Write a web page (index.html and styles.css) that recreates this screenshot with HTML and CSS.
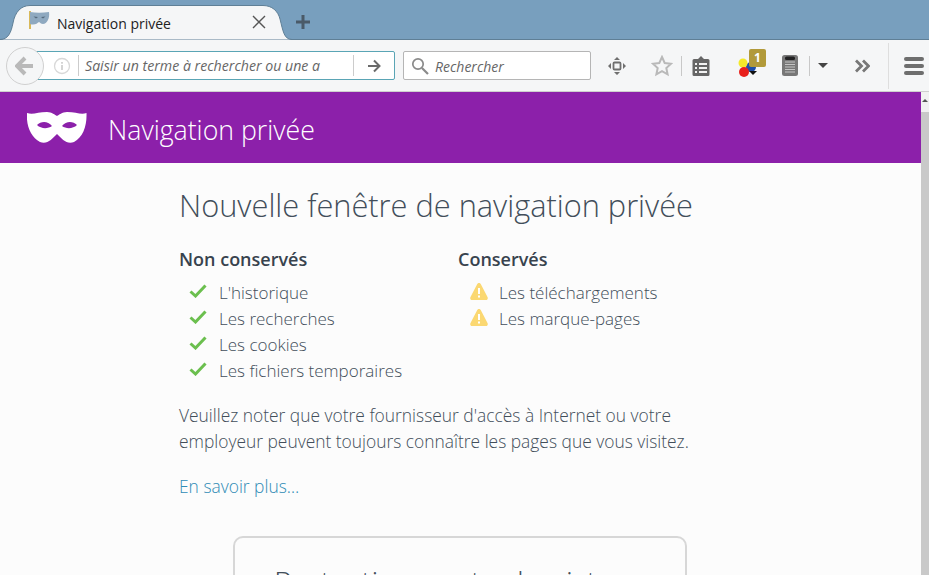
FILE: index.html
```html
<!DOCTYPE html>
<html lang="fr">
<head>
    <meta charset="UTF-8">
    <meta name="viewport" content="width=device-width, initial-scale=1.0">
    <title>Navigation privée</title>
    <link rel="stylesheet" href="styles.css">
</head>
<body>
    <div class="tabstrip">
        <div class="tab">
            <svg class="tab-shape" width="292" height="35" viewBox="0 0 292 35">
                <path d="M0 34.500C8 34.500 11 28 13 18 15 7 21 .5 30 .5H263C272 .5 278 6 280 14 283 26 284 34.500 292 34.500" fill="#f5f6f7" stroke="#5f7f96"/>
            </svg>
            <svg class="tab-icon" width="21" height="18" viewBox="0 0 21 18">
                <rect x="0" y="0" width="2" height="18" fill="#d9b95a"/>
                <path d="M1 1c6 1 12 1 19 0 1 6-2 12-6 12-2 0-3-1.500-4-2-1.500 1-3 2.500-6 2.500-1 0-2 0-3-.5z" fill="#8fa9c0"/>
                <path d="M4.500 5.500l4.500.5-2 1.500zM12 6l4.500-.5-2.500 2z" fill="#54697b"/>
            </svg>
            <span class="tab-title">Navigation privée</span>
            <svg class="tab-close" width="16" height="16" viewBox="0 0 16 16">
                <path d="M2 2l12 12M14 2L2 14" stroke="#555" stroke-width="1.400" fill="none"/>
            </svg>
        </div>
        <svg class="new-tab" width="16" height="16" viewBox="0 0 16 16">
            <path d="M8 1v14M1 8h14" stroke="#4a5a68" stroke-width="3" fill="none"/>
        </svg>
    </div>

    <div class="toolbar">
        <div class="back-btn">
            <svg width="20" height="20" viewBox="0 0 20 20">
                <path d="M10 2l-8 8 8 8M3 10h15" stroke="#b9b9b9" stroke-width="4" fill="none"/>
            </svg>
        </div>
        <div class="urlbar">
            <svg class="info-icon" width="18" height="18" viewBox="0 0 18 18">
                <circle cx="9" cy="9" r="7.500" stroke="#d8d8d8" stroke-width="1.300" fill="none"/>
                <path d="M9 8v5M9 5v1.800" stroke="#d0d0d0" stroke-width="1.800" fill="none"/>
            </svg>
            <span class="url-text">Saisir un terme à rechercher ou une a</span>
            <span class="go-btn">
                <svg width="14" height="14" viewBox="0 0 14 14">
                    <path d="M7 1.500L12.500 7 7 12.500M12 7H1" stroke="#6a6a6a" stroke-width="2" fill="none"/>
                </svg>
            </span>
        </div>
        <div class="searchbar">
            <svg width="18" height="18" viewBox="0 0 18 18">
                <circle cx="7" cy="7" r="5.200" stroke="#8a8a8a" stroke-width="1.700" fill="none"/>
                <path d="M11 11l6 6" stroke="#8a8a8a" stroke-width="2.200" fill="none"/>
            </svg>
            <span>Rechercher</span>
        </div>
        <svg class="tool move" width="18" height="18" viewBox="0 0 18 18">
            <rect x="5.500" y="5.500" width="7" height="7" rx="1" stroke="#6f6f6f" stroke-width="1.800" fill="none"/>
            <path d="M9 0l3 3H6zM9 18l-3-3h6zM0 9l3-3v6zM18 9l-3 3V6z" fill="#6f6f6f"/>
        </svg>
        <svg class="tool star" width="22" height="22" viewBox="0 0 22 22">
            <path d="M11 2l2.700 6 6.300.7-4.700 4.300 1.300 6.400L11 16.200l-5.600 3.200 1.300-6.400L2 8.700 8.300 8z" stroke="#b9b9b9" stroke-width="2" fill="none"/>
        </svg>
        <span class="sep sep-star"></span>
        <svg class="tool clip" width="18" height="20" viewBox="0 0 18 20">
            <path d="M9 0l3 3h4a1.500 1.500 0 0 1 1.500 1.500v14A1.500 1.500 0 0 1 16 20H2a1.500 1.500 0 0 1-1.500-1.500v-14A1.500 1.500 0 0 1 2 3h4z" fill="#666"/>
            <path d="M3 7h2v2H3zM7 7h8v2H7zM3 11h2v2H3zM7 11h8v2H7zM3 15h2v2H3zM7 15h8v2H7z" fill="#f2f2f2"/>
        </svg>
        <div class="tool addon">
            <svg width="22" height="22" viewBox="0 0 22 22">
                <circle cx="14" cy="12" r="5" fill="#1f4fa8"/>
                <circle cx="6" cy="8" r="4.500" fill="#f4e92a"/>
                <circle cx="7" cy="17" r="5" fill="#e8201c"/>
                <path d="M12 16h8l-4 4z" fill="#111"/>
            </svg>
            <span class="addon-badge">1</span>
        </div>
        <svg class="tool reader" width="16" height="21" viewBox="0 0 16 21">
            <rect x="0" y="0" width="16" height="21" rx="2.500" fill="#777"/>
            <rect x="3" y="1.500" width="10" height="3.500" rx="1.500" fill="#222"/>
            <path d="M3 7h10M3 9.500h10M3 12h10M3 14.500h10M3 17h10" stroke="#c4c4c4" stroke-width="1"/>
        </svg>
        <span class="sep sep-reader"></span>
        <span class="caret"></span>
        <svg class="tool more" width="16" height="14" viewBox="0 0 16 14">
            <path d="M2 1.500L7.500 7 2 12.500M9 1.500L14.500 7 9 12.500" stroke="#777" stroke-width="2.800" fill="none"/>
        </svg>
        <span class="sep sep-menu"></span>
        <div class="hamburger"><span></span><span></span><span></span></div>
    </div>

    <div class="viewport">
        <div class="page">
            <header class="banner">
                <svg width="60" height="33" viewBox="0 0 60 33">
                    <path fill-rule="evenodd" fill="#fff" d="M0 1C6 3 11 0 20 0 25 0 28 3 30 4 32 3 35 0 40 0 49 0 54 3 59.500 1 60 14 56 25 47 30 40 33 35 27 30 22 25 27 20 33 13 30 4 25-1 14 0 1zM10 13C14 9 21 9 25 14 21 17 14 17 10 13zM35 14C39 9 46 9 50 13 46 17 39 17 35 14z"/>
                </svg>
                <span>Navigation privée</span>
            </header>

            <div class="content">
                <h1>Nouvelle fenêtre de navigation privée</h1>
                <div class="columns">
                    <div class="col col-left">
                        <h2>Non conservés</h2>
                        <ul>
                            <li><svg class="check" width="18" height="14" viewBox="0 0 18 14"><path d="M1.500 7.500l5 4.500L16.500 1.500" stroke="#6bbf4e" stroke-width="3" fill="none"/></svg>L'historique</li>
                            <li><svg class="check" width="18" height="14" viewBox="0 0 18 14"><path d="M1.500 7.500l5 4.500L16.500 1.500" stroke="#6bbf4e" stroke-width="3" fill="none"/></svg>Les recherches</li>
                            <li><svg class="check" width="18" height="14" viewBox="0 0 18 14"><path d="M1.500 7.500l5 4.500L16.500 1.500" stroke="#6bbf4e" stroke-width="3" fill="none"/></svg>Les cookies</li>
                            <li><svg class="check" width="18" height="14" viewBox="0 0 18 14"><path d="M1.500 7.500l5 4.500L16.500 1.500" stroke="#6bbf4e" stroke-width="3" fill="none"/></svg>Les fichiers temporaires</li>
                        </ul>
                    </div>
                    <div class="col">
                        <h2>Conservés</h2>
                        <ul class="kept">
                            <li><svg class="check" width="18" height="17" viewBox="0 0 18 17"><path d="M9 0c1 0 1.500.5 2 1.500l6.500 12.500c.7 1.500 0 3-1.500 3H2c-1.500 0-2.200-1.500-1.500-3L7 1.500C7.500.5 8 0 9 0z" fill="#fbd872"/><path d="M9 5v6M9 12.500v2" stroke="#fff" stroke-width="2"/></svg>Les téléchargements</li>
                            <li><svg class="check" width="18" height="17" viewBox="0 0 18 17"><path d="M9 0c1 0 1.500.5 2 1.500l6.500 12.500c.7 1.500 0 3-1.500 3H2c-1.500 0-2.200-1.500-1.500-3L7 1.500C7.500.5 8 0 9 0z" fill="#fbd872"/><path d="M9 5v6M9 12.500v2" stroke="#fff" stroke-width="2"/></svg>Les marque-pages</li>
                        </ul>
                    </div>
                </div>
                <p class="note">Veuillez noter que votre fournisseur d'accès à Internet ou votre<br>employeur peuvent toujours connaître les pages que vous visitez.</p>
                <a class="more-link" href="#">En savoir plus…</a>
                <div class="tracking-card">
                    <h3>Protection contre le pistage</h3>
                </div>
            </div>
        </div>
        <div class="scrollbar">
            <span class="scroll-arrow"></span>
            <span class="scroll-thumb"></span>
        </div>
    </div>
</body>
</html>
```

FILE: styles.css
```css
html, body {
    height: 100%;
}
body {
    margin: 0;
    height: 575px;
    overflow: hidden;
    font-family: 'Open Sans', 'Liberation Sans', sans-serif;
    background: #fcfcfc;
    display: flex;
    flex-direction: column;
}

/* tab strip */
.tabstrip {
    height: 40px;
    flex: none;
    box-sizing: border-box;
    background: #789fbe;
    border-bottom: 1px solid #5f7f96;
    display: flex;
    align-items: flex-end;
}
.tab {
    width: 292px;
    height: 35px;
    margin-bottom: -1px;
    box-sizing: border-box;
    position: relative;
    display: flex;
    align-items: center;
    padding: 0 25px 0 29px;
}
.tab-shape {
    position: absolute;
    left: 0;
    top: 0;
}
.tab-icon, .tab-title, .tab-close {
    position: relative;
}
.tab-icon {
    flex: none;
    margin: -5px 7px 0 0;
}
.tab-title {
    flex: 1;
    font-size: 14px;
    color: #222;
    margin-top: 1px;
}
.tab-close {
    margin-top: -1px;
}
.new-tab {
    margin: 0 0 9px 3px;
}

/* toolbar */
.toolbar {
    height: 52px;
    flex: none;
    box-sizing: border-box;
    background: #f5f6f7;
    border-bottom: 1px solid #cfcfcf;
    display: flex;
    align-items: center;
    padding: 0 0 0 6px;
    position: relative;
}
.back-btn {
    position: absolute;
    left: 6px;
    top: 7px;
    width: 38px;
    height: 38px;
    box-sizing: border-box;
    border: 1px solid #d0d0d0;
    border-radius: 50%;
    background: #f5f6f7;
    display: flex;
    align-items: center;
    justify-content: center;
    z-index: 1;
}
.urlbar {
    margin-left: 27px;
    width: 362px;
    height: 29px;
    box-sizing: border-box;
    background: #fff;
    border: 1px solid #5aa5b5;
    border-radius: 2px;
    display: flex;
    align-items: center;
    padding-left: 19px;
}
.info-icon {
    flex: none;
    margin-right: 7px;
}
.url-text {
    flex: 1;
    height: 21px;
    line-height: 22px;
    border-left: 1px solid #ccc;
    padding-left: 6px;
    font-size: 14.150px;
    font-style: italic;
    color: #666;
    white-space: nowrap;
    overflow: hidden;
}
.go-btn {
    width: 41px;
    height: 21px;
    flex: none;
    box-sizing: border-box;
    border-left: 1px solid #ccc;
    display: flex;
    align-items: center;
    justify-content: center;
}
.searchbar {
    margin-left: 8px;
    width: 188px;
    height: 29px;
    box-sizing: border-box;
    background: #fff;
    border: 1px solid #b5b5b5;
    border-radius: 2px;
    display: flex;
    align-items: center;
    padding-left: 7px;
    font-size: 14px;
    font-style: italic;
    color: #666;
}
.searchbar span {
    margin: 1px 0 0 6px;
}
.tool {
    flex: none;
}
.move {
    margin-left: 17px;
}
.star {
    margin-left: 25px;
}
.sep {
    flex: none;
    width: 1px;
    background: #c8c8c8;
}
.sep-star {
    height: 20px;
    margin-left: 8px;
}
.clip {
    margin-left: 10px;
}
.addon {
    margin-left: 27px;
    width: 22px;
    height: 22px;
    position: relative;
}
.addon svg {
    display: block;
}
.addon-badge {
    position: absolute;
    left: 12px;
    top: -6px;
    width: 17px;
    height: 18px;
    border-radius: 2px;
    background: #b29a3a;
    color: #fff;
    font-size: 12px;
    font-weight: 700;
    line-height: 17px;
    text-align: center;
}
.reader {
    margin-left: 23px;
}
.sep-reader {
    height: 20px;
    margin-left: 11px;
}
.caret {
    flex: none;
    margin-left: 8px;
    width: 0;
    height: 0;
    border-left: 5px solid transparent;
    border-right: 5px solid transparent;
    border-top: 5px solid #444;
}
.more {
    margin-left: 26px;
}
.sep-menu {
    height: 46px;
    margin-left: 18px;
    background: #dedede;
}
.hamburger {
    margin-left: 15px;
    width: 20px;
    flex: none;
    display: flex;
    flex-direction: column;
    gap: 3px;
}
.hamburger span {
    height: 4px;
    border-radius: 2px;
    background: #6e6e6e;
}

/* page area */
.viewport {
    flex: 1;
    display: flex;
    min-height: 0;
}
.page {
    flex: 1;
    min-width: 0;
    overflow: hidden;
}
.scrollbar {
    width: 8px;
    flex: none;
    background: #f1f1f1;
    display: flex;
    flex-direction: column;
    align-items: center;
}
.scroll-arrow {
    flex: none;
    width: 0;
    height: 0;
    margin: 7px 0 10px;
    border-left: 3px solid transparent;
    border-right: 3px solid transparent;
    border-bottom: 3px solid #555;
}
.scroll-thumb {
    flex: 1;
    align-self: stretch;
    background: #c9c9c9;
}
.banner {
    height: 71px;
    background: #8c20aa;
    color: #fff;
    display: flex;
    align-items: center;
    padding-left: 27px;
    font-size: 26.700px;
    font-weight: 300;
}
.banner svg {
    margin-top: 2px;
}
.banner span {
    margin: 3px 0 0 21px;
}
.content {
    padding: 20px 0 0 179px;
    color: #424e5a;
}
h1 {
    margin: 0;
    font-size: 30.750px;
    line-height: 44px;
    font-weight: 300;
}
.columns {
    display: flex;
    margin-top: 19px;
}
.col-left {
    width: 279px;
}
h2 {
    margin: 0 0 8px;
    font-size: 18px;
    line-height: 26px;
    font-weight: 600;
    color: #38434e;
}
ul {
    list-style: none;
    margin: 0;
    padding: 0 0 0 10px;
}
.kept {
    padding-left: 12px;
}
.kept .check {
    margin-right: 11px;
}
li {
    height: 26px;
    line-height: 26px;
    font-size: 17px;
    font-weight: 300;
    display: flex;
    align-items: center;
    white-space: nowrap;
}
.check {
    flex: none;
    margin-right: 12px;
    position: relative;
    top: -2px;
}
.note {
    margin: 18px 0 0;
    font-size: 17.400px;
    line-height: 26px;
    font-weight: 300;
    white-space: nowrap;
}
.more-link {
    display: block;
    margin-top: 19px;
    font-size: 17.400px;
    line-height: 26px;
    font-weight: 300;
    color: #2f8bb5;
    text-decoration: none;
}
.tracking-card {
    margin: 37px 0 0 54px;
    width: 454px;
    height: 120px;
    box-sizing: border-box;
    border: 2px solid #d7d7d7;
    border-radius: 10px;
    padding: 24px 39px;
}
h3 {
    margin: 0;
    font-size: 30px;
    line-height: 40px;
    font-weight: 300;
}
```
